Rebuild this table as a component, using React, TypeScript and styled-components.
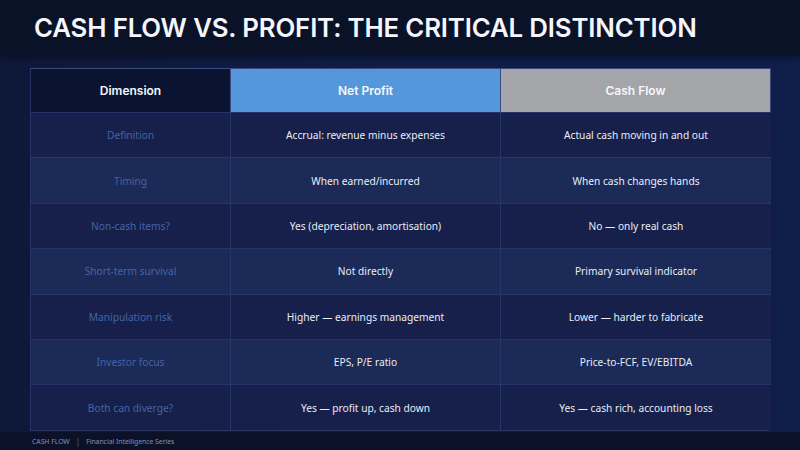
import React from "react";
import styled, { createGlobalStyle } from "styled-components";

const Global = createGlobalStyle`
  html, body { margin: 0; padding: 0; }
  body { width: 800px; height: 450px; overflow: hidden; background: #0f1b42; }
  #root { width: 800px; height: 450px; }
`;

const Page = styled.div`
  width: 800px;
  height: 450px;
  display: flex;
  flex-direction: column;
  background: linear-gradient(90deg, #0e1839 0%, #101d47 50%, #0f1d4a 100%);
  font-family: "Noto Sans", "Open Sans", sans-serif;
`;

const TitleBar = styled.div`
  height: 56px;
  flex: none;
  display: flex;
  align-items: center;
  padding-left: 34px;
  background: #0a1227;
  box-shadow: 0 2px 6px rgba(0, 0, 0, 0.35);
`;

const Title = styled.h1`
  margin: 0;
  font-family: Inter, "Noto Sans", sans-serif;
  font-weight: 600;
  font-size: 25.8px;
  letter-spacing: -0.15px;
  color: #f4f6fb;
  line-height: 1;
`;

const Body = styled.div`
  flex: 1;
  padding: 12px 30px 0 30px;
  display: flex;
  flex-direction: column;
`;

const Table = styled.div`
  display: grid;
  grid-template-columns: 200px 270px 270px;
  grid-template-rows: 44px repeat(7, 45.4px);
  border: 1px solid #263465;
  border-top: none;
  box-sizing: border-box;
  width: 740px;
`;

const HeadCell = styled.div<{ $bg: string }>`
  background: ${(p) => p.$bg};
  display: flex;
  align-items: center;
  justify-content: center;
  font-family: Inter, "Noto Sans", sans-serif;
  font-weight: 600;
  font-size: 12px;
  color: #f5f7fb;
  border-right: 1px solid #3a4a7c;
  border-top: 1px solid #3a4a7c;
  &:last-child { border-right: none; }
`;

const Cell = styled.div<{ $alt: boolean; $dim?: boolean; $last?: boolean }>`
  background: ${(p) => (p.$alt ? "#1b2a57" : "#16204a")};
  display: flex;
  align-items: center;
  justify-content: center;
  font-size: 10.2px;
  color: ${(p) => (p.$dim ? "#4564a8" : "#e9edf6")};
  border-top: 1px solid #26356a;
  border-right: ${(p) => (p.$last ? "none" : "1px solid #26356a")};
  text-align: center;
`;

const Footer = styled.div`
  height: 18px;
  flex: none;
  display: flex;
  align-items: center;
  gap: 6px;
  padding-left: 32px;
  background: #0a1128;
  font-size: 6.8px;
  color: #8a92ad;
`;

const Sep = styled.span`
  color: #5b6688;
  font-size: 8px;
`;

const rows: [string, string, string][] = [
  ["Definition", "Accrual: revenue minus expenses", "Actual cash moving in and out"],
  ["Timing", "When earned/incurred", "When cash changes hands"],
  ["Non-cash items?", "Yes (depreciation, amortisation)", "No — only real cash"],
  ["Short-term survival", "Not directly", "Primary survival indicator"],
  ["Manipulation risk", "Higher — earnings management", "Lower — harder to fabricate"],
  ["Investor focus", "EPS, P/E ratio", "Price-to-FCF, EV/EBITDA"],
  ["Both can diverge?", "Yes — profit up, cash down", "Yes — cash rich, accounting loss"],
];

export default function App() {
  return (
    <>
      <Global />
      <Page>
        <TitleBar>
          <Title>CASH FLOW VS. PROFIT: THE CRITICAL DISTINCTION</Title>
        </TitleBar>
        <Body>
          <Table>
            <HeadCell $bg="#0a132f">Dimension</HeadCell>
            <HeadCell $bg="#5597db">Net Profit</HeadCell>
            <HeadCell $bg="#a4a5a9">Cash Flow</HeadCell>
            {rows.map((r, i) => (
              <React.Fragment key={r[0]}>
                <Cell $alt={i % 2 === 1} $dim>{r[0]}</Cell>
                <Cell $alt={i % 2 === 1}>{r[1]}</Cell>
                <Cell $alt={i % 2 === 1} $last>{r[2]}</Cell>
              </React.Fragment>
            ))}
          </Table>
        </Body>
        <Footer>
          <span>CASH FLOW</span>
          <Sep>|</Sep>
          <span>Financial Intelligence Series</span>
        </Footer>
      </Page>
    </>
  );
}
